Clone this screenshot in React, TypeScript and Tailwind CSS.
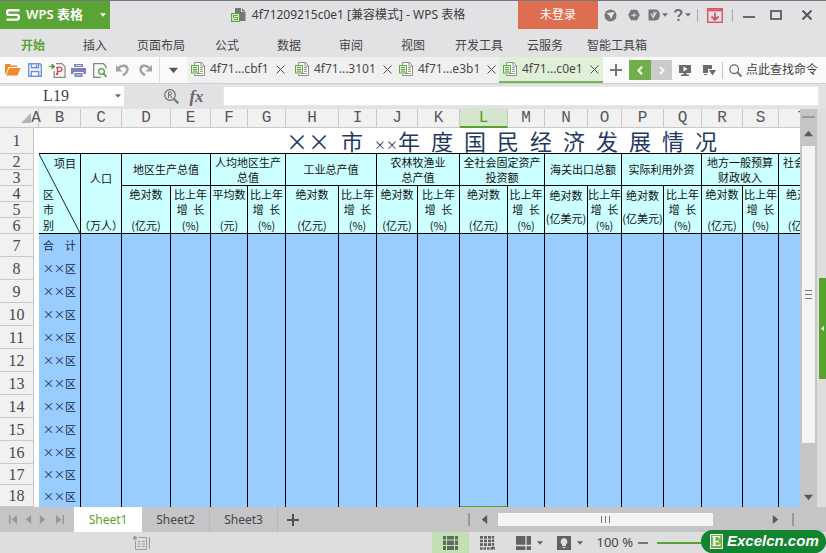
import type { ReactNode } from "react";

const COLS: { name: string; width: string }[] = [
  { name: "A", width: "w-[5px]" },
  { name: "B", width: "w-[42px]" },
  { name: "C", width: "w-[41px]" },
  { name: "D", width: "w-[49px]" },
  { name: "E", width: "w-[40px]" },
  { name: "F", width: "w-[37px]" },
  { name: "G", width: "w-[38px]" },
  { name: "H", width: "w-[53px]" },
  { name: "I", width: "w-[38px]" },
  { name: "J", width: "w-[41px]" },
  { name: "K", width: "w-[42px]" },
  { name: "L", width: "w-[48px]" },
  { name: "M", width: "w-[37px]" },
  { name: "N", width: "w-[43px]" },
  { name: "O", width: "w-[34px]" },
  { name: "P", width: "w-[42px]" },
  { name: "Q", width: "w-[38px]" },
  { name: "R", width: "w-[41px]" },
  { name: "S", width: "w-[36px]" },
  { name: "T", width: "w-[48px]" },
  { name: "U", width: "" },
];

const GROUPS: { lines: string[]; unit: string; measure?: string }[] = [
  { lines: ["地区生产总值"], unit: "(亿元)" },
  { lines: ["人均地区生产", "总值"], unit: "(元)", measure: "平均数" },
  { lines: ["工业总产值"], unit: "(亿元)" },
  { lines: ["农林牧渔业", "总产值"], unit: "(亿元)" },
  { lines: ["全社会固定资产", "投资额"], unit: "(亿元)" },
  { lines: ["海关出口总额"], unit: "(亿美元)" },
  { lines: ["实际利用外资"], unit: "(亿美元)" },
  { lines: ["地方一般预算", "财政收入"], unit: "(亿元)" },
  { lines: ["社会消费品零售", "总额"], unit: "(亿元)" },
];

const DATA_ROWS = [7, 8, 9, 10, 11, 12, 13, 14, 15, 16, 17, 18];

const MENUS: { label: string; width: string }[] = [
  { label: "开始", width: "w-[62px]" },
  { label: "插入", width: "w-[62px]" },
  { label: "页面布局", width: "w-[70px]" },
  { label: "公式", width: "w-[62px]" },
  { label: "数据", width: "w-[62px]" },
  { label: "审阅", width: "w-[62px]" },
  { label: "视图", width: "w-[62px]" },
  { label: "开发工具", width: "w-[70px]" },
  { label: "云服务", width: "w-[62px]" },
  { label: "智能工具箱", width: "w-[82px]" },
];

const FILES = ["4f71...cbf1", "4f71...3101", "4f71...e3b1", "4f71...c0e1"];

function IconButton({ label, className, children }: { label: string; className: string; children: ReactNode }) {
  return (
    <button type="button" aria-label={label} className={`flex shrink-0 items-center justify-center ${className}`}>
      {children}
    </button>
  );
}

function Triangle({ dir, className }: { dir: "up" | "down" | "left" | "right"; className: string }) {
  const points = {
    up: "0,8 5,2 10,8",
    down: "0,2 10,2 5,8",
    left: "8,0 8,10 2,5",
    right: "2,0 2,10 8,5",
  }[dir];
  return (
    <svg viewBox="0 0 10 10" className={className} fill="currentColor" aria-hidden="true">
      <polygon points={points} />
    </svg>
  );
}

function SheetFileIcon() {
  return (
    <svg width="14" height="14" viewBox="0 0 14 14" fill="none" aria-hidden="true" className="shrink-0">
      <path d="M3.500 3V.5h7l3 3v10h-10V12" fill="#fff" stroke="#8d8d8d" />
      <path d="M10 .5V4h3.500" stroke="#8d8d8d" />
      <path d="M9 5.500h3M9 7.500h3M9 9.500h3M6 11.500h6" stroke="#9a9a9a" />
      <rect x=".5" y="3.500" width="7" height="7.500" fill="#e6f3de" stroke="#62a843" />
      <path d="M2 5.500h4M2 7.500h4M2 9.200h4" stroke="#62a843" />
    </svg>
  );
}

function CloseX() {
  return (
    <svg width="9" height="9" viewBox="0 0 9 9" stroke="#4a4a4a" strokeWidth="1" aria-hidden="true">
      <path d="M.5.5l8 8M8.500.5l-8 8" />
    </svg>
  );
}

function TitleBar() {
  return (
    <header className="flex h-[29px] border-t border-[#77777b]">
      <button type="button" className="flex w-[96px] shrink-0 items-center gap-[6px] bg-[#5aa335] pl-[6px] text-[13px] text-white">
        <svg width="14" height="12" viewBox="0 0 14 12" fill="none" stroke="#fff" strokeWidth="2.400" aria-hidden="true">
          <path d="M13.500 1.300H3C1.800 1.300 1.200 2 1.200 3.400S1.800 5.900 3 5.900h7.800c1.400 0 2 .8 2 2.300s-.6 2.400-2 2.400H.6" />
        </svg>
        <span className="whitespace-nowrap font-semibold">WPS 表格</span>
      </button>
      <IconButton label="应用菜单" className="w-[14px] bg-[#5aa335] text-white">
        <Triangle dir="down" className="h-[6px] w-[6px]" />
      </IconButton>
      <h1 className="flex min-w-0 flex-1 items-center justify-center gap-[6px] whitespace-nowrap pl-[68px] text-xs text-[#3c3c3e]">
        <svg width="15" height="14" viewBox="0 0 15 14" aria-hidden="true" className="shrink-0">
          <path d="M4 0h6v4h4.500v9H9V5H4z" fill="#77787b" />
          <path d="M11 0l3.500 3.500H11z" fill="#77787b" />
          <rect x=".6" y="5.600" width="7.800" height="7.800" fill="#e9f3e4" stroke="#5fa63f" strokeWidth="1.200" />
          <path d="M6.500 7.500h-4v2h4v2h-4" fill="none" stroke="#5fa63f" />
        </svg>
        <span>4f71209215c0e1 [兼容模式] - WPS 表格</span>
      </h1>
      <button type="button" className="w-[80px] shrink-0 bg-[#de6e50] text-xs text-white">未登录</button>
      <IconButton label="皮肤" className="w-[24px]">
        <svg width="13" height="13" viewBox="0 0 13 13" aria-hidden="true">
          <circle cx="6.500" cy="6.500" r="6" fill="#77777a" />
          <path d="M2.500 4l8-1-3.500 7-1.500-3.500z" fill="#e9e9ea" />
        </svg>
      </IconButton>
      <IconButton label="导航" className="w-[24px]">
        <svg width="12" height="12" viewBox="0 0 12 12" aria-hidden="true">
          <path d="M3 .8h6L11.800 6 9 11.200H3L.2 6z" fill="#77777a" />
          <path d="M2 6.300l3.500-.8L6 3l.8 2.500 3.200.3-3.200 1L6 9l-.8-2z" fill="#dcdcde" />
        </svg>
      </IconButton>
      <IconButton label="文档" className="w-[24px] gap-[2px] text-[#737376]">
        <svg width="12" height="12" viewBox="0 0 12 12" aria-hidden="true">
          <path d="M.5.5H7c3 0 4.800 2.200 4.800 5.500S10 11.500 7 11.500H.5z" fill="#77777a" />
          <path d="M3 4.500l2.200 4L8.500 3M6 2.500v5" fill="none" stroke="#e4e4e6" strokeWidth="1.200" />
        </svg>
        <Triangle dir="down" className="h-[6px] w-[6px]" />
      </IconButton>
      <IconButton label="帮助" className="w-[24px] gap-[2px] text-[#737376]">
        <svg width="9" height="12" viewBox="0 0 9 12" fill="none" stroke="#6d6d70" strokeWidth="2" aria-hidden="true">
          <path d="M1 3.500C1.200 1.800 2.500 1 4.200 1c2 0 3.300 1 3.300 2.600C7.500 5.700 4.500 5.700 4.500 8M4.500 9.800V12" />
        </svg>
        <Triangle dir="down" className="h-[6px] w-[6px]" />
      </IconButton>
      <span className="my-auto ml-[3px] h-[13px] w-px bg-[#a8a8aa]" />
      <IconButton label="下载" className="w-[34px]">
        <svg width="16" height="15" viewBox="0 0 16 15" fill="none" stroke="#db5260" aria-hidden="true">
          <rect x=".7" y=".7" width="14.600" height="13.600" strokeWidth="1.400" />
          <path d="M1 2.300h14" strokeWidth="2" />
          <path d="M8 4.500V12M4.500 8.500L8 12l3.500-3.500" strokeWidth="1.800" />
        </svg>
      </IconButton>
      <span className="my-auto h-[13px] w-px bg-[#a8a8aa]" />
      <IconButton label="最小化" className="w-[32px]">
        <span className="mt-[3px] h-[2px] w-[12px] bg-[#68686b]" />
      </IconButton>
      <IconButton label="最大化" className="w-[22px]">
        <span className="h-[10px] w-[12px] border-2 border-[#68686b]" />
      </IconButton>
      <IconButton label="关闭" className="w-[39px]">
        <svg width="10" height="10" viewBox="0 0 10 10" stroke="#58585b" strokeWidth="2" aria-hidden="true">
          <path d="M.5.5l9 9M9.500.5l-9 9" />
        </svg>
      </IconButton>
    </header>
  );
}

function Menu() {
  return (
    <nav className="flex h-[28px] items-center pb-px pl-[2px] pt-[7px] text-xs text-[#444446]">
      {MENUS.map((m, i) => (
        <button key={m.label} type="button" className={`${m.width} shrink-0 whitespace-nowrap ${i === 0 ? "font-bold text-[#57a32e]" : ""}`}>
          {m.label}
        </button>
      ))}
    </nav>
  );
}

function ToolBar() {
  return (
    <div className="flex h-[26px] items-stretch bg-[#fafafa]">
      <div className="flex shrink-0 items-center pl-[1px]">
        <IconButton label="打开" className="w-[23px]">
          <svg width="16" height="12" viewBox="0 0 16 12" fill="#f08a2c" aria-hidden="true">
            <path d="M0 0h5l1.500 1.500H12V3H3.500L1.200 9.500 0 10z" />
            <path d="M4.300 4H15.500l-3 7.500H1.200z" />
          </svg>
        </IconButton>
        <IconButton label="保存" className="w-[22px]">
          <svg width="14" height="14" viewBox="0 0 14 14" fill="none" stroke="#6f92dc" strokeWidth="1.400" aria-hidden="true">
            <path d="M.7.7h11.300l1.300 1.300v11.300H.7zM3.500.7v4h7v-4M3.300 13V8.500h7.400V13" />
            <path d="M8.500 2v2" />
          </svg>
        </IconButton>
        <IconButton label="输出为PDF" className="w-[22px]">
          <svg width="17" height="15" viewBox="0 0 17 15" fill="none" aria-hidden="true">
            <path d="M7 .7h6l3 3v10.600H5.200V8" stroke="#868686" strokeWidth="1.200" />
            <path d="M8.500 12V4.500M7 5c3.500-1.500 6-.8 6 1.200S11 8.800 8.500 8.500M6.800 11.500l2-1.500" stroke="#cf3f54" strokeWidth="1.300" />
            <path d="M0 3.500h3.500M3 1l3 2.500L3 6z" stroke="#5a9c49" fill="#5a9c49" />
          </svg>
        </IconButton>
        <IconButton label="打印" className="w-[21px]">
          <svg width="15" height="13" viewBox="0 0 15 13" fill="#8080bd" aria-hidden="true">
            <path d="M3 0h9v3H3zM0 4h15v6h-2.500V8h-10v2H0zM3.500 9h8v4h-8z" />
            <path d="M4.500 1.500h6M5 11h5" stroke="#d8d8ee" />
          </svg>
        </IconButton>
        <IconButton label="打印预览" className="w-[22px]">
          <svg width="14" height="15" viewBox="0 0 14 15" fill="none" aria-hidden="true">
            <path d="M13 5.500V3.500L10.500.7H.7v13.600H8" stroke="#868686" strokeWidth="1.300" />
            <circle cx="8.500" cy="8.500" r="2.800" stroke="#5a9c49" strokeWidth="1.300" />
            <path d="M10.500 10.500l3 3.500" stroke="#5a9c49" strokeWidth="1.800" />
          </svg>
        </IconButton>
        <IconButton label="撤销" className="w-[23px]">
          <svg width="13" height="12" viewBox="0 0 13 12" fill="none" stroke="#a3a3a3" strokeWidth="2.400" aria-hidden="true">
            <path d="M2 4.500C5 1 11.500.5 11.500 5.500 11.500 8 9 10 7 11.500" />
            <path d="M0 1v6.500h6.500z" fill="#a3a3a3" stroke="none" />
          </svg>
        </IconButton>
        <IconButton label="恢复" className="w-[22px]">
          <svg width="13" height="12" viewBox="0 0 13 12" fill="none" stroke="#a3a3a3" strokeWidth="2.400" aria-hidden="true">
            <path d="M11 4.500C8 1 1.500.5 1.500 5.500 1.500 8 4 10 6 11.500" />
            <path d="M13 1v6.500H6.500z" fill="#a3a3a3" stroke="none" />
          </svg>
        </IconButton>
      </div>
      <span className="ml-[3px] w-px bg-[#dcdcdc]" />
      <IconButton label="更多工具" className="w-[27px] text-[#58585a]">
        <Triangle dir="down" className="h-[9px] w-[9px]" />
      </IconButton>
      <div className="flex min-w-0 bg-[#f0f0f0]">
        {FILES.map((f, i) => (
          <div
            key={f}
            className={`flex w-[104px] shrink-0 items-center border-b-2 pl-[4px] ${i === 3 ? "border-[#76b45a] bg-[#dff0d6]" : "border-transparent"}`}
          >
            <button type="button" className="flex flex-1 items-center gap-[5px] text-xs text-[#48484a]">
              <SheetFileIcon />
              {f}
            </button>
            <IconButton label={`关闭 ${f}`} className="w-[23px]">
              <CloseX />
            </IconButton>
          </div>
        ))}
      </div>
      <div className="flex flex-1 items-center">
        <IconButton label="新建" className="w-[26px]">
          <svg width="12" height="12" viewBox="0 0 12 12" stroke="#77777a" strokeWidth="2" aria-hidden="true">
            <path d="M6 0v12M0 6h12" />
          </svg>
        </IconButton>
        <IconButton label="上一个" className="h-[20px] w-[22px] bg-[#70b04c]">
          <svg width="6" height="9" viewBox="0 0 6 9" fill="none" stroke="#fff" strokeWidth="2" aria-hidden="true">
            <path d="M5 .7L1.500 4.500 5 8.300" />
          </svg>
        </IconButton>
        <IconButton label="下一个" className="h-[20px] w-[21px] bg-[#cbcbcd]">
          <svg width="6" height="9" viewBox="0 0 6 9" fill="none" stroke="#f8f8f8" strokeWidth="2" aria-hidden="true">
            <path d="M1 .7l3.500 3.800L1 8.300" />
          </svg>
        </IconButton>
        <IconButton label="播放" className="w-[26px]">
          <svg width="12" height="11" viewBox="0 0 12 11" fill="#6b6b6e" aria-hidden="true">
            <path d="M0 0h12v8H7.500v1.500H10V11H2V9.500h2.500V8H0z" />
            <path d="M4.500 1.500v5L8.500 4z" fill="#fafafa" />
          </svg>
        </IconButton>
        <IconButton label="窗口列表" className="w-[22px]">
          <svg width="13" height="11" viewBox="0 0 13 11" fill="#6b6b6e" aria-hidden="true">
            <path d="M0 0h9v4H5v4H0z" />
            <path d="M6 5h7L9.500 10.500z" />
            <path d="M1 9.500h3" stroke="#6b6b6e" />
          </svg>
        </IconButton>
        <span className="ml-[2px] h-[17px] w-px bg-[#c2c2c4]" />
        <label className="flex min-w-0 flex-1 items-center gap-[4px] pl-[6px]">
          <svg width="13" height="13" viewBox="0 0 13 13" fill="none" stroke="#68686a" strokeWidth="1.300" aria-hidden="true" className="shrink-0">
            <circle cx="5.200" cy="5.200" r="4.300" />
            <path d="M8.500 8.500l4 4" strokeWidth="1.800" />
          </svg>
          <input
            type="text"
            aria-label="查找命令"
            placeholder="点此查找命令"
            className="w-full min-w-0 bg-transparent text-xs placeholder:text-[#3e3e40] placeholder:opacity-100 focus:outline-none"
          />
        </label>
      </div>
    </div>
  );
}

function FormulaBar() {
  return (
    <div className="flex h-[26px] items-center border-t border-[#cfcfd1] pb-[2px] pt-px">
      <div className="flex h-[20px] w-[124px] shrink-0 bg-white">
        <input
          aria-label="名称框"
          defaultValue="L19"
          className="w-[112px] bg-transparent text-center font-['Liberation_Serif',serif] text-base leading-none text-[#444] focus:outline-none"
        />
        <IconButton label="选择名称" className="w-[12px] text-[#6a6a6c]">
          <Triangle dir="down" className="h-[6px] w-[6px]" />
        </IconButton>
      </div>
      <IconButton label="查找函数" className="ml-[35px] w-[24px]">
        <svg width="15" height="15" viewBox="0 0 15 15" fill="none" stroke="#707073" aria-hidden="true">
          <circle cx="6" cy="6" r="5.300" strokeWidth="1.200" />
          <path d="M10 10l4.300 4.300" strokeWidth="2" />
          <path d="M4.500 9V3h1.700c2 0 2 2.800 0 2.800H4.500M6 6l2 3" />
        </svg>
      </IconButton>
      <button type="button" aria-label="插入函数" className="w-[27px] text-center font-['Liberation_Serif',serif] text-[17px] font-bold italic leading-none text-[#68686b]">
        fx
      </button>
      <input aria-label="编辑栏" className="ml-[13px] mr-[7px] h-[20px] min-w-0 flex-1 border border-[#e8e8ea] bg-white px-1 text-xs focus:outline-none" />
    </div>
  );
}

const HEAD_CELL = "border-b border-r border-black bg-[#ccffff] p-0 font-normal";

function RowHead({ n }: { n: number }) {
  return (
    <th scope="row" className="border-b border-r border-[#c9c9c9] bg-[#f1f1f1] p-0 font-['Liberation_Serif',serif] text-base font-normal leading-[15px] text-[#48484a]">
      {n}
    </th>
  );
}

function MeasureCells({ unit, measure = "绝对数" }: { unit: string; measure?: string }) {
  const wide = unit.length > 4;
  return (
    <>
      <th scope="col" rowSpan={3} className={HEAD_CELL}>
        <div
          className={
            wide
              ? "flex h-[47px] flex-col items-center gap-[8px] whitespace-nowrap pt-[2px] leading-[15px]"
              : "grid h-[47px] grid-rows-3 justify-center whitespace-nowrap pt-px text-center leading-[15px]"
          }
        >
          <span>{measure}</span>
          {!wide && <span />}
          <span>{unit}</span>
        </div>
      </th>
      <th scope="col" rowSpan={3} className={HEAD_CELL}>
        <div className="grid h-[47px] grid-rows-3 justify-center whitespace-nowrap pt-px text-center leading-[15px]">
          <span>比上年</span>
          <span>增&ensp;长</span>
          <span>(%)</span>
        </div>
      </th>
    </>
  );
}

function Sheet() {
  return (
    <table className="w-full min-w-[865px] table-fixed border-separate border-spacing-0 bg-white font-['Noto_Sans_CJK_SC',sans-serif] text-[11px] text-[#111]">
      <colgroup>
        <col className="w-[34px]" />
        {COLS.map((c) => (
          <col key={c.name} className={c.width} />
        ))}
      </colgroup>
      <thead>
        <tr className="h-[19px]">
          <td className="border-b border-[#c9c9c9] bg-[#f1f1f1] p-0">
            <svg width="10" height="10" viewBox="0 0 10 10" className="ml-auto mr-[3px]" aria-hidden="true">
              <path d="M10 0v10H0z" fill="#b5b5b7" />
            </svg>
          </td>
          {COLS.map((c) => (
            <th
              key={c.name}
              scope="col"
              className={`p-0 font-['Liberation_Mono',monospace] text-base font-normal leading-none ${
                c.name === "L"
                  ? "border-b-2 border-r border-b-[#57a32e] border-r-[#c9c9c9] bg-[#d5e6cc] text-[#4f9a2b]"
                  : "border-b border-r border-[#c9c9c9] bg-[#f1f1f1] text-[#58585a]"
              }`}
            >
              <div className="flex justify-center">{c.name}</div>
            </th>
          ))}
        </tr>
      </thead>
      <tbody>
        <tr className="h-[26px]">
          <RowHead n={1} />
          <td className="p-0" />
          <td colSpan={20} className="whitespace-nowrap border-b border-black p-0 pl-[247px] text-left text-[22px] leading-[25px] text-[#1f3864]">
            ××&ensp;市&ensp;<span className="text-xs">××</span>年&ensp;度&ensp;国&ensp;民&ensp;经&ensp;济&ensp;发&ensp;展&ensp;情&ensp;况
          </td>
        </tr>
        <tr className="h-[16px]">
          <RowHead n={2} />
          <td className="p-0" />
          <th rowSpan={5} scope="col" className={HEAD_CELL}>
            <div className="relative grid h-[79px] grid-rows-5 px-[4px] pt-[2px] text-left leading-[15px]">
              <svg viewBox="0 0 41 79" preserveAspectRatio="none" className="absolute inset-0 h-full w-full" stroke="#1a2a2a" aria-hidden="true">
                <path d="M0 0l41 79" />
              </svg>
              <span className="text-right">项目</span>
              <span />
              <span>区</span>
              <span>市</span>
              <span>别</span>
            </div>
          </th>
          <th rowSpan={5} scope="col" className={HEAD_CELL}>
            <div className="grid h-[79px] grid-rows-5 justify-center whitespace-nowrap pt-[2px] text-center leading-[15px]">
              <span />
              <span>人口</span>
              <span />
              <span />
              <span>（万人）</span>
            </div>
          </th>
          {GROUPS.map((g) => (
            <th key={g.lines[0]} rowSpan={2} colSpan={2} scope="colgroup" className={`${HEAD_CELL} whitespace-nowrap leading-[15px]`}>
              {g.lines.map((l) => (
                <div key={l} className="flex justify-center">{l}</div>
              ))}
            </th>
          ))}
        </tr>
        <tr className="h-[16px]">
          <RowHead n={3} />
          <td className="p-0" />
        </tr>
        <tr className="h-[16px]">
          <RowHead n={4} />
          <td className="p-0" />
          {GROUPS.map((g) => (
            <MeasureCells key={g.lines[0]} unit={g.unit} measure={g.measure} />
          ))}
        </tr>
        <tr className="h-[16px]">
          <RowHead n={5} />
          <td className="p-0" />
        </tr>
        <tr className="h-[16px]">
          <RowHead n={6} />
          <td className="p-0" />
        </tr>
        {DATA_ROWS.map((n) => (
          <tr key={n} className={n === 17 ? "h-[21px]" : n === 18 ? "h-[22px]" : "h-[23px]"}>
            <RowHead n={n} />
            <td className="p-0" />
            <th scope="row" className="whitespace-nowrap border-r border-black bg-[#99ccff] p-0 font-normal leading-[15px] text-[#15254a]">
              {n === 7 ? <>合&emsp;计</> : "××区"}
            </th>
            {COLS.slice(2).map((c) => (
              <td
                key={c.name}
                className={`border-r border-r-black bg-[#99ccff] p-0 ${n === 18 && c.name === "L" ? "border-b border-b-[#57a32e]" : ""}`}
              />
            ))}
          </tr>
        ))}
      </tbody>
    </table>
  );
}

function SheetBar() {
  return (
    <div className="flex h-[25px] items-stretch bg-[#c5c5c7]">
      <div className="flex w-[74px] shrink-0 items-center pl-[6px] text-[#98989a]">
        <IconButton label="第一张" className="w-[14px]">
          <svg width="8" height="9" viewBox="0 0 8 9" fill="currentColor" aria-hidden="true">
            <path d="M0 0h1.500v9H0zM8 0v9L2.500 4.500z" />
          </svg>
        </IconButton>
        <IconButton label="上一张" className="w-[16px]">
          <Triangle dir="left" className="h-[9px] w-[9px]" />
        </IconButton>
        <IconButton label="下一张" className="w-[12px]">
          <Triangle dir="right" className="h-[9px] w-[9px]" />
        </IconButton>
        <IconButton label="最后一张" className="w-[24px]">
          <svg width="8" height="9" viewBox="0 0 8 9" fill="currentColor" aria-hidden="true">
            <path d="M6.500 0H8v9H6.500zM0 0v9l5.500-4.500z" />
          </svg>
        </IconButton>
      </div>
      <button type="button" className="w-[68px] shrink-0 bg-white text-xs text-[#57a32e]">Sheet1</button>
      <button type="button" className="w-[68px] shrink-0 border-r border-[#b9b9bb] text-xs text-[#444446]">Sheet2</button>
      <button type="button" className="w-[68px] shrink-0 border-r border-[#b9b9bb] text-xs text-[#444446]">Sheet3</button>
      <IconButton label="新建工作表" className="w-[30px]">
        <svg width="12" height="12" viewBox="0 0 12 12" stroke="#505052" strokeWidth="2" aria-hidden="true">
          <path d="M6 0v12M0 6h12" />
        </svg>
      </IconButton>
      <span className="my-auto ml-[160px] h-[13px] w-[2px] bg-[#98989a]" />
      <IconButton label="向左滚动" className="w-[28px] text-[#58585a]">
        <Triangle dir="left" className="h-[9px] w-[9px]" />
      </IconButton>
      <div className="flex flex-1 items-center">
        <div className="flex h-[13px] w-4/5 items-center justify-center gap-[3px] bg-[#f4f4f4]">
          <span className="h-[7px] w-px bg-[#77777a]" />
          <span className="h-[7px] w-px bg-[#77777a]" />
          <span className="h-[7px] w-px bg-[#77777a]" />
        </div>
      </div>
      <IconButton label="向右滚动" className="w-[16px] text-[#58585a]">
        <Triangle dir="right" className="h-[9px] w-[9px]" />
      </IconButton>
      <span className="my-auto ml-[9px] mr-[32px] h-[13px] w-[2px] bg-[#98989a]" />
    </div>
  );
}

function StatusBar() {
  return (
    <footer className="relative flex h-[21px] items-stretch bg-[#dededf]">
      <IconButton label="宏" className="ml-[130px] w-[19px]">
        <svg width="14" height="14" viewBox="0 0 14 14" fill="none" stroke="#9b9b9d" aria-hidden="true">
          <circle cx="2" cy="2" r="2" fill="#9b9b9d" stroke="none" />
          <path d="M5 1.500h8.500v12h-11V5" />
          <path d="M4.500 5.500h3M9 5.500h3M4.500 8h3M9 8h3M4.500 10.500h3M9 10.500h3" />
        </svg>
      </IconButton>
      <span className="my-auto h-[12px] w-px bg-[#9b9b9d]" />
      <span className="flex-1" />
      <div className="flex shrink-0">
        <IconButton label="普通视图" className="w-[37px] bg-[#c3e0b4]">
          <svg width="15" height="14" viewBox="0 0 15 14" aria-hidden="true">
            <rect width="15" height="14" fill="#5f6b5b" />
            <path d="M0 4h15M0 9.500h15M3.500 0v14M11.500 0v14" stroke="#c3e0b4" />
          </svg>
        </IconButton>
        <IconButton label="分页预览" className="w-[37px]">
          <svg width="15" height="14" viewBox="0 0 15 14" aria-hidden="true">
            <rect width="11" height="10" fill="#616163" />
            <path d="M0 3.200h11M0 6.700h11M3.500 0v10M7.500 0v10" stroke="#dededf" />
            <path d="M13 0v14M0 12.500h15" stroke="#616163" strokeWidth="2.500" strokeDasharray="2.500 1" />
          </svg>
        </IconButton>
        <IconButton label="冻结窗格" className="w-[42px] gap-[6px] pl-[6px] text-[#616163]">
          <svg width="15" height="14" viewBox="0 0 15 14" aria-hidden="true">
            <rect width="15" height="14" fill="#616163" />
            <path d="M10 0v9M0 9.500h15M10 9v5" stroke="#dededf" strokeWidth="1.300" />
          </svg>
          <Triangle dir="down" className="h-[6px] w-[6px]" />
        </IconButton>
        <IconButton label="护眼模式" className="w-[40px] gap-[6px] pl-[5px] text-[#616163]">
          <svg width="14" height="14" viewBox="0 0 14 14" aria-hidden="true">
            <rect width="14" height="14" fill="#616163" />
            <path d="M7 2a3.500 3.500 0 0 0-2 6.300V10h4V8.300A3.500 3.500 0 0 0 7 2z" fill="#dededf" />
            <path d="M5.500 11.500h3" stroke="#dededf" />
          </svg>
          <Triangle dir="down" className="h-[6px] w-[6px]" />
        </IconButton>
        <span className="self-center whitespace-nowrap pl-[9px] text-[13px] leading-none text-[#444446]">100 %</span>
        <IconButton label="缩小" className="w-[20px]">
          <span className="h-[2px] w-[10px] bg-[#77777a]" />
        </IconButton>
        <input
          type="range"
          aria-label="显示比例"
          defaultValue={100}
          className="my-auto ml-[4px] h-[2px] w-[169px] appearance-none bg-[#57a32e]"
        />
      </div>
      <a
        href="#excelcn"
        className="absolute -top-[2px] right-0 flex h-[23px] w-[125px] items-center rounded-full bg-[#12832f] pl-[9px] font-['Liberation_Sans',sans-serif] text-[15px] font-bold italic text-white"
      >
        <span className="mr-[4px] flex h-[15px] w-[13px] shrink-0 items-center justify-center border border-white bg-[#6db33f] font-['Liberation_Serif',serif] text-[14px] not-italic leading-none">
          E
        </span>
        Excelcn.com
      </a>
    </footer>
  );
}

export default function App() {
  return (
    <div className="flex min-h-screen flex-col overflow-hidden bg-[#e2e2e4] font-['Noto_Sans','Noto_Sans_CJK_SC',sans-serif]">
      <TitleBar />
      <Menu />
      <ToolBar />
      <FormulaBar />
      <main className="flex">
        <div className="min-w-0 flex-1 overflow-hidden">
          <Sheet />
        </div>
        <div className="flex w-[17px] shrink-0 flex-col items-center bg-[#c5c5c7] text-[#58585a]">
          <div className="flex h-[37px] shrink-0 flex-col items-center">
            <span className="mt-[7px] h-[2px] w-[13px] bg-[#98989a]" />
            <IconButton label="向上滚动" className="mt-[9px] h-[12px] w-[17px]">
              <Triangle dir="up" className="h-[9px] w-[9px]" />
            </IconButton>
          </div>
          <div className="flex w-[13px] flex-1 flex-col items-center justify-center gap-[3px] bg-[#f4f4f4]">
            <span className="h-px w-[7px] bg-[#77777a]" />
            <span className="h-px w-[7px] bg-[#77777a]" />
            <span className="h-px w-[7px] bg-[#77777a]" />
          </div>
          <div className="flex h-[64px] shrink-0 items-end">
            <IconButton label="向下滚动" className="h-[20px] w-[17px]">
              <Triangle dir="down" className="h-[9px] w-[9px]" />
            </IconButton>
          </div>
        </div>
        <div className="flex w-[9px] shrink-0 items-center justify-end bg-[#dededf] pt-[41px]">
          <IconButton label="展开侧栏" className="h-[101px] w-[7px] bg-[#57a32e] text-white">
            <Triangle dir="left" className="h-[5px] w-[5px]" />
          </IconButton>
        </div>
      </main>
      <SheetBar />
      <StatusBar />
    </div>
  );
}
